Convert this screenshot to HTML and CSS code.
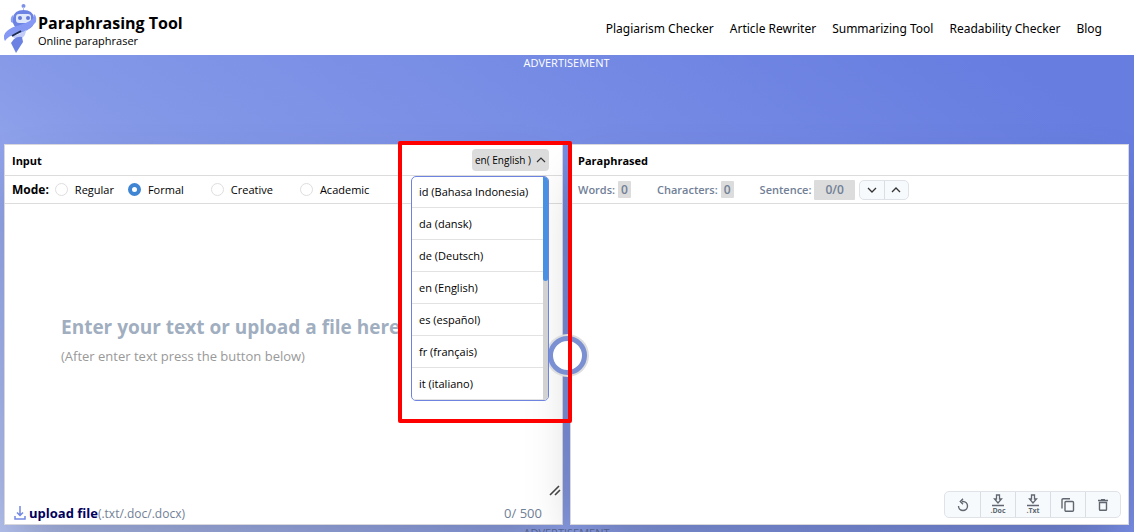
FILE: index.html
```html
<!DOCTYPE html>
<html lang="en">
<head>
    <meta charset="UTF-8">
    <meta name="viewport" content="width=device-width, initial-scale=1.0">
    <title>Paraphrasing Tool</title>
    <link rel="stylesheet" href="styles.css">
</head>
<body>
    <header class="header">
        <a class="brand" href="#">
            <svg class="logo" width="34" height="50" viewBox="0 0 34 50">
                <circle cx="19.500" cy="3" r="2" fill="#7c90ea"/>
                <path d="M19.500 4v5" stroke="#b5c1f5" stroke-width="1"/>
                <path d="M9 15Q10 7 19.500 7T30 15v5q-2 7-10.500 7T9 20z" fill="#6d83e3"/>
                <path d="M9 12q-3 2-2 7l2 1zM30 11q3 2 2 8l-2 2z" fill="#8da0f2"/>
                <rect x="12" y="11" width="15" height="9" rx="3" fill="#dfe7fa"/>
                <circle cx="16" cy="15" r="2" fill="#6379d8"/>
                <circle cx="24" cy="15" r="2" fill="#6379d8"/>
                <path d="M31 13q2 7-5 12-4 4-14 6-8 2-11 7-3-6 2-10 4-4 13-6 11-3 15-9z" fill="#8599f4"/>
                <path d="M8 33q9-2 14-6 0 5-4 8h-8z" fill="#c3cdf9"/>
                <path d="M8 33l9-5" stroke="#1c2b4d" stroke-width="2"/>
                <path d="M10 36q4-3 8-2l1 5-7 11-5-10z" fill="#6b82e2"/>
            </svg>
            <span class="brand-text">
                <strong class="brand-name">Paraphrasing Tool</strong>
                <span class="brand-sub">Online paraphraser</span>
            </span>
        </a>
        <nav class="nav">
            <a href="#">Plagiarism Checker</a>
            <a href="#">Article Rewriter</a>
            <a href="#">Summarizing Tool</a>
            <a href="#">Readability Checker</a>
            <a href="#">Blog</a>
        </nav>
    </header>

    <main class="main">
        <div class="ad">ADVERTISEMENT</div>

        <div class="editor">
            <section class="panel">
                <div class="panel-head">
                    <h2>Input</h2>
                    <div class="lang">
                        <select class="lang-select" aria-label="Language">
                            <option>en( English )</option>
                        </select>
                        <svg class="lang-arrow" width="10" height="6" viewBox="0 0 10 6"><path d="M1 5l4-4 4 4" fill="none" stroke="#333" stroke-width="1.2"/></svg>
                        <div class="lang-menu">
                            <ul class="lang-list" role="listbox" aria-label="Languages">
                                <li role="option">id (Bahasa Indonesia)</li>
                                <li role="option">da (dansk)</li>
                                <li role="option">de (Deutsch)</li>
                                <li role="option">en (English)</li>
                                <li role="option">es (español)</li>
                                <li role="option">fr (français)</li>
                                <li role="option">it (italiano)</li>
                            </ul>
                            <div class="lang-track"><div class="lang-thumb"></div></div>
                        </div>
                    </div>
                </div>
                <div class="panel-bar modes">
                    <strong>Mode:</strong>
                    <label class="mode"><input type="radio" name="mode">Regular</label>
                    <label class="mode"><input type="radio" name="mode" checked>Formal</label>
                    <label class="mode"><input type="radio" name="mode">Creative</label>
                    <label class="mode"><input type="radio" name="mode">Academic</label>
                </div>
                <div class="text-wrap">
                    <textarea class="text" id="inputText"></textarea>
                    <label class="hint" for="inputText">
                        <span class="hint-title">Enter your text or upload a file here</span>
                        <span class="hint-sub">(After enter text press the button below)</span>
                    </label>
                    <svg class="grip" width="12" height="12" viewBox="0 0 12 12"><path d="M1 11L10 2M6 11l5-5" stroke="#444" stroke-width="1.600"/></svg>
                </div>
                <div class="panel-foot">
                    <button class="upload">
                        <svg width="12" height="14" viewBox="0 0 12 14"><path d="M6 0v9M3 6.500l3 3 3-3M1 10v3h10v-3" fill="none" stroke="#7488e4" stroke-width="1.500"/></svg>
                        <span><strong>upload file</strong>(.txt/.doc/.docx)</span>
                    </button>
                    <span class="count">0/ 500</span>
                </div>
            </section>

            <section class="panel">
                <div class="panel-head">
                    <h2>Paraphrased</h2>
                </div>
                <div class="panel-bar stats">
                    <span class="stat">Words: <b>0</b></span>
                    <span class="stat">Characters: <b>0</b></span>
                    <span class="stat">Sentence: <b class="wide">0/0</b></span>
                    <div class="group steps">
                        <button aria-label="Next sentence"><svg width="10" height="6" viewBox="0 0 10 6"><path d="M1 1l4 4 4-4" fill="none" stroke="#333" stroke-width="1.3"/></svg></button>
                        <button aria-label="Previous sentence"><svg width="10" height="6" viewBox="0 0 10 6"><path d="M1 5l4-4 4 4" fill="none" stroke="#333" stroke-width="1.3"/></svg></button>
                    </div>
                </div>
                <div class="output"></div>
                <div class="group tools">
                    <button aria-label="Reset"><svg width="12" height="14" viewBox="0 0 12 14"><path d="M5 3.500h1a4.500 4.500 0 1 1-4.500 4.500M6 .8L3.300 3.500 6 6.200" fill="none" stroke="#606770" stroke-width="1.400"/></svg></button>
                    <button><svg width="12" height="13" viewBox="0 0 12 13"><path d="M4.500 1h3v4H9.500L6 9 2.500 5h2zM0 11.500h12" fill="none" stroke="#606770" stroke-width="1.300"/></svg><span>.Doc</span></button>
                    <button><svg width="12" height="13" viewBox="0 0 12 13"><path d="M4.500 1h3v4H9.500L6 9 2.500 5h2zM0 11.500h12" fill="none" stroke="#606770" stroke-width="1.300"/></svg><span>.Txt</span></button>
                    <button aria-label="Copy"><svg width="14" height="14" viewBox="0 0 14 14"><path d="M1 10.500V2q0-1.200 1.200-1.200H9" fill="none" stroke="#606770" stroke-width="1.400"/><rect x="4" y="3.500" width="8.500" height="9.800" rx="1" fill="none" stroke="#606770" stroke-width="1.400"/></svg></button>
                    <button aria-label="Delete"><svg width="10" height="12" viewBox="0 0 10 12"><path d="M0 1.500h10M3 .7h4M1.500 3.500h7v7q0 .8-.8.8H2.300q-.8 0-.8-.8z" fill="none" stroke="#606770" stroke-width="1.400"/></svg></button>
                </div>
            </section>

            <div class="loader"></div>
            <div class="highlight"></div>
        </div>

        <div class="ad ad-bottom">ADVERTISEMENT</div>
    </main>
</body>
</html>
```
FILE: styles.css
```css
* {
    box-sizing: border-box;
}
body {
    margin: 0;
    height: 100vh;
    overflow: hidden;
    font-family: "Segoe UI", "Open Sans", "Noto Sans", sans-serif;
    font-size: 12px;
    color: #000;
}
button, select, textarea {
    font: inherit;
    color: inherit;
}
a {
    color: inherit;
    text-decoration: none;
}
svg {
    display: block;
}
.header {
    height: 55px;
    padding: 0 32px 0 4px;
    display: flex;
    align-items: center;
    justify-content: space-between;
    background: #fff;
}
.brand {
    display: flex;
    align-items: center;
}
.brand-text {
    display: flex;
    flex-direction: column;
    padding-top: 6px;
}
.brand-name {
    font-size: 16px;
    line-height: 20px;
}
.brand-sub {
    font-size: 11px;
    line-height: 16px;
}
.nav {
    display: flex;
    gap: 16px;
    padding-top: 2px;
    font-family: "Segoe UI", "Noto Sans", sans-serif;
}
.main {
    background: linear-gradient(35deg, #b4c2f0 0%, #8599e8 38%, #677de0 93%);
    padding: 0 5px 0 4px;
    height: calc(100vh - 55px);
}
.ad {
    height: 89px;
    line-height: 16px;
    font-size: 11px;
    color: #fff;
    text-align: center;
}
.ad-bottom {
    color: #5c6c9c;
}
.editor {
    position: relative;
    display: grid;
    grid-template-columns: 1fr 1fr;
    gap: 7px;
}
.panel {
    display: flex;
    flex-direction: column;
    min-height: 381px;
    background: #fff;
    border: 1px solid #d8d8dc;
    box-shadow: 0 25px 50px -12px rgba(0, 0, 0, 0.25);
}
.panel-head {
    height: 31px;
    padding: 0 13px 0 7px;
    display: flex;
    align-items: center;
    justify-content: space-between;
    border-bottom: 1px solid #dcdcdc;
}
.panel-head h2 {
    margin: 0;
    font-size: 11px;
    font-weight: 700;
}
.panel-bar {
    height: 28px;
    padding: 0 7px;
    display: flex;
    align-items: center;
    border-bottom: 1px solid #dcdcdc;
}
.lang {
    position: relative;
}
.lang-select {
    display: block;
    appearance: none;
    width: 77px;
    height: 22px;
    padding: 0 3px;
    border: 0;
    border-radius: 4px;
    background: #dcdcdc;
    font-size: 10px;
}
.lang-arrow {
    position: absolute;
    right: 3px;
    top: 8px;
}
.lang-menu {
    position: absolute;
    right: 0;
    top: 27px;
    z-index: 3;
    width: 138px;
    height: 225px;
    display: flex;
    border: 1px solid #6d83e0;
    border-radius: 5px;
    background: #fff;
    overflow: hidden;
}
.lang-list {
    flex: 1;
    margin: -1px 0 0;
    padding: 0;
    list-style: none;
    font-size: 11px;
}
.lang-list li {
    height: 32px;
    line-height: 31px;
    padding-left: 7px;
    white-space: nowrap;
    border-bottom: 1px solid #e2e2e2;
}
.lang-track {
    width: 5px;
    background: #d2d2d2;
}
.lang-thumb {
    height: 104px;
    border-radius: 0 0 3px 3px;
    background: #4a90e2;
}
.modes strong {
    margin-right: 6px;
    font-weight: 700;
}
.mode {
    display: flex;
    align-items: center;
    gap: 7px;
    margin-right: 27px;
    font-size: 11px;
}
.mode:nth-of-type(1) {
    margin-right: 14px;
}
.mode input {
    appearance: none;
    width: 13px;
    height: 13px;
    margin: 0;
    border: 1px solid #dedede;
    border-radius: 50%;
    background: #fff;
}
.mode input:checked {
    border: 4px solid #3f85d3;
}
.text-wrap {
    position: relative;
    flex: 1;
    display: flex;
}
.text {
    flex: 1;
    border: 0;
    outline: 0;
    resize: none;
    background: transparent;
}
.hint {
    position: absolute;
    left: 56px;
    top: 110px;
    display: flex;
    flex-direction: column;
    gap: 8px;
    white-space: nowrap;
}
.hint-title {
    font-size: 19px;
    line-height: 26px;
    font-weight: 700;
    color: #a0aec0;
}
.hint-sub {
    font-size: 13px;
    line-height: 16px;
    color: #999;
}
.grip {
    position: absolute;
    right: 1px;
    bottom: 6px;
}
.panel-foot {
    height: 22px;
    padding: 0 20px 0 9px;
    display: flex;
    align-items: center;
    justify-content: space-between;
    color: #718096;
}
.upload {
    display: flex;
    align-items: center;
    gap: 3px;
    padding: 0;
    border: 0;
    background: none;
}
.upload strong {
    color: #00005c;
    font-size: 13px;
}
.count {
    font-size: 13px;
}
.stats {
    color: #718096;
    font-size: 11px;
    font-weight: 600;
}
.stat {
    display: flex;
    align-items: center;
    gap: 3px;
    margin-right: 26px;
}
.stat b {
    padding: 0 3px;
    line-height: 17px;
    font-size: 12px;
    font-weight: 600;
    background: #dcdcdc;
    border-radius: 1px;
}
.stat .wide {
    padding: 0 11px;
    line-height: 20px;
}
.stat:nth-of-type(3) {
    margin-right: 4px;
}
.group {
    display: flex;
    border: 1px solid #dfe3e8;
    border-radius: 5px;
    background: #f7fafc;
    overflow: hidden;
}
.group button {
    display: flex;
    flex-direction: column;
    align-items: center;
    justify-content: center;
    padding: 0;
    border: 0;
    background: none;
    color: #606770;
}
.group button + button {
    border-left: 1px solid #dadde2;
}
.steps button {
    width: 24px;
    height: 18px;
}
.output {
    flex: 1;
}
.tools {
    align-self: flex-end;
    margin: 0 7px 6px;
}
.tools button {
    width: 35px;
    height: 25px;
}
.tools span {
    font-size: 7px;
    line-height: 8px;
    font-weight: 700;
}
.loader {
    position: absolute;
    left: calc(50% - 19px);
    top: 192px;
    z-index: 2;
    width: 39px;
    height: 39px;
    border: 5px solid #7b90d2;
    border-radius: 50%;
    background: #fff;
    box-shadow: 0 0 0 2px #dedede;
}
.highlight {
    position: absolute;
    right: calc(50% - 5px);
    top: -3px;
    z-index: 4;
    width: 174px;
    height: 282px;
    border: 4px solid #f00;
    border-radius: 2px;
    pointer-events: none;
}
```
